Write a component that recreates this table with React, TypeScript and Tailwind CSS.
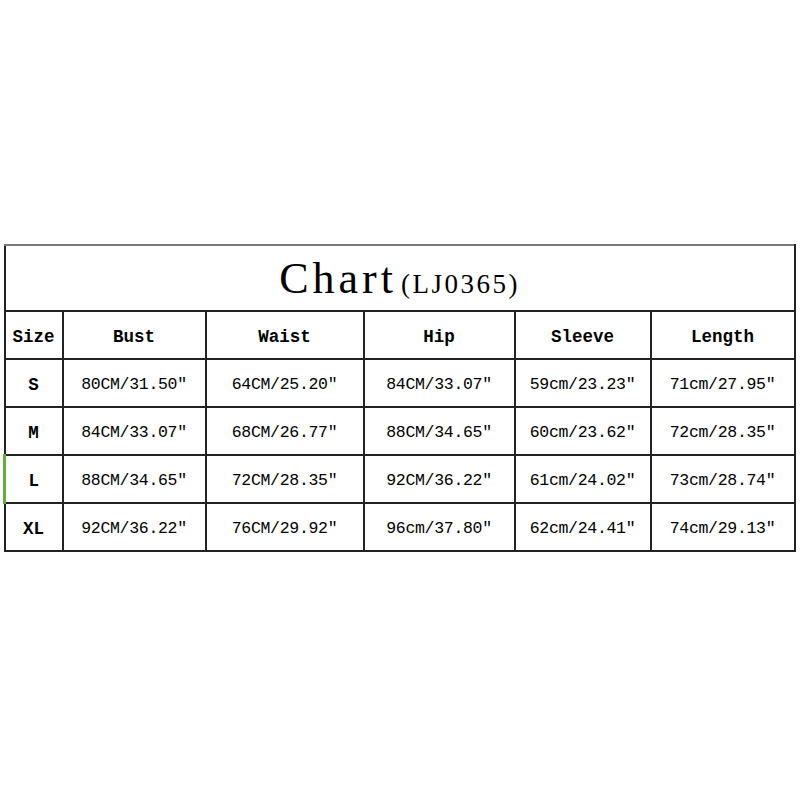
const headers = ['Size', 'Bust', 'Waist', 'Hip', 'Sleeve', 'Length']

const rows = [
  ['S', '80CM/31.50″', '64CM/25.20″', '84CM/33.07″', '59cm/23.23″', '71cm/27.95″'],
  ['M', '84CM/33.07″', '68CM/26.77″', '88CM/34.65″', '60cm/23.62″', '72cm/28.35″'],
  ['L', '88CM/34.65″', '72CM/28.35″', '92CM/36.22″', '61cm/24.02″', '73cm/28.74″'],
  ['XL', '92CM/36.22″', '76CM/29.92″', '96cm/37.80″', '62cm/24.41″', '74cm/29.13″'],
]

const widths = ['w-[58px]', 'w-[143px]', 'w-[158px]', 'w-[151px]', 'w-[136px]', 'w-[144px]']

export default function App() {
  return (
    <div className="w-[800px] h-[800px] bg-white pt-[244px] pl-[3px]" style={{ fontFamily: '"Liberation Mono", monospace' }}>
      <table className="border-collapse table-fixed w-[790px] text-black">
        <colgroup>
          {widths.map((w, i) => <col key={i} className={w} />)}
        </colgroup>
        <thead>
          <tr className="h-[66px]">
            <th colSpan={6} className="border-2 border-[#222] border-t-[#7a7a7a] font-normal text-center align-middle">
              <span className="inline-flex items-baseline pt-[1px]" style={{ fontFamily: '"Liberation Serif", serif' }}>
                <span className="text-[44px] leading-none tracking-[4px]">Chart</span>
                <span className="text-[27px] leading-none tracking-[2.5px] ml-[4px]">(LJ0365)</span>
              </span>
            </th>
          </tr>
          <tr className="h-[48px]">
            {headers.map((h) => (
              <th key={h} className="border-2 border-[#222] text-[17.5px] font-bold text-center align-middle pt-[4px]">{h}</th>
            ))}
          </tr>
        </thead>
        <tbody>
          {rows.map((r) => (
            <tr key={r[0]} className="h-[48px]">
              {r.map((c, i) => (
                <td
                  key={i}
                  className={
                    i === 0
                      ? (r[0] === 'L' ? 'border-2 border-[#222] border-l-[3px] border-l-[#5fb236] text-[17.5px] font-bold text-center pt-[4px]' : 'border-2 border-[#222] text-[17.5px] font-bold text-center pt-[4px]')
                      : 'border-2 border-[#222] text-[16.5px] tracking-[-0.3px] text-center pt-[4px]'
                  }
                >
                  {c}
                </td>
              ))}
            </tr>
          ))}
        </tbody>
      </table>
    </div>
  )
}
